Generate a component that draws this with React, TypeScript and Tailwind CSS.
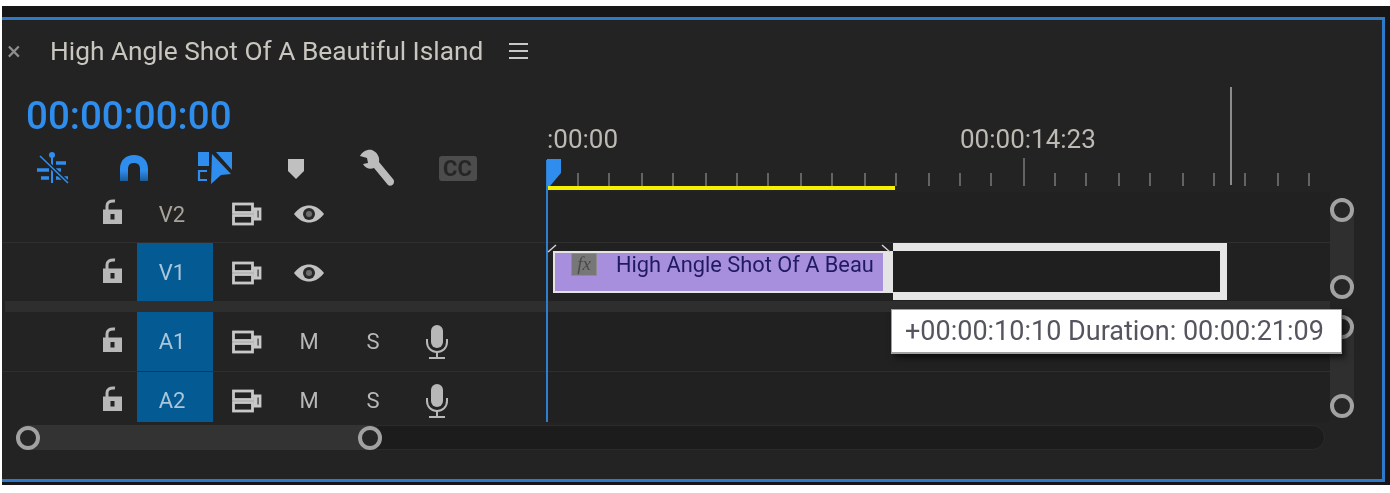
import React from "react";

const font = "font-['Roboto','Noto_Sans',sans-serif]";

function Lock() {
  return (
    <svg width="22" height="26" viewBox="0 0 22 26" fill="none" className="mt-[-4px]">
      <path d="M5 12V7C5 3.500 7.500 1.500 13 2" stroke="#b8b8b8" strokeWidth="3" />
      <path fillRule="evenodd" clipRule="evenodd" d="M1 10.500H20V25H1ZM8.500 15V20.500H12.500V15Z" fill="#b8b8b8" />
    </svg>
  );
}

function Toggle() {
  return (
    <svg width="30" height="24" viewBox="0 0 30 24" fill="none" stroke="#c8c8c8" strokeWidth="2.800">
      <rect x="1.500" y="2" width="19" height="8.500" />
      <rect x="1.500" y="13.500" width="19" height="8.500" />
      <path d="M20 7H28V17H20" />
      <path d="M23.500 8V16" strokeWidth="4" />
    </svg>
  );
}

function Eye() {
  return (
    <svg width="32" height="20" viewBox="0 0 32 20">
      <path d="M1 10C6 3.500 11 1.500 16 1.500S26 3.500 31 10C26 16.500 21 18.500 16 18.500S6 16.500 1 10Z" fill="#c2c2c2" />
      <circle cx="16" cy="10" r="6" fill="#2a2a2a" />
      <circle cx="16" cy="10" r="3" fill="#6e6e6e" />
    </svg>
  );
}

function Mic() {
  return (
    <svg width="24" height="36" viewBox="0 0 24 36" fill="none">
      <rect x="6" y="1" width="12" height="23" rx="6" fill="#b8b8b8" />
      <path d="M2 15V18C2 24 6.500 28 12 28S22 24 22 18V15" stroke="#b8b8b8" strokeWidth="2" />
      <path d="M12 28V33M4 34H20" stroke="#b8b8b8" strokeWidth="2" />
    </svg>
  );
}

function Nest() {
  return (
    <svg width="36" height="34" viewBox="0 0 36 34" fill="none" stroke="#2f8ded" strokeWidth="3">
      <path d="M17 2V32" strokeWidth="2" />
      <circle cx="17" cy="4" r="3" fill="#2f8ded" stroke="none" />
      <path d="M21 12H31M2 19H14M21 19H26M6 27H14M21 27H33" strokeWidth="3.600" />
      <path d="M5 5L33 32" stroke="#232323" strokeWidth="4.500" />
      <path d="M5 5L33 32" strokeWidth="1.600" />
    </svg>
  );
}

function Magnet() {
  return (
    <svg width="30" height="28" viewBox="0 0 30 28" fill="none">
      <defs>
        <linearGradient id="magnetFade" x1="0" y1="0" x2="0" y2="1">
          <stop offset="0.6" stopColor="#2f8ded" />
          <stop offset="1" stopColor="#1b5c9a" />
        </linearGradient>
      </defs>
      <path d="M1 27V15C1 6 7 1 15 1S29 6 29 15V27H21V15C21 11 19 9 15 9S9 11 9 15V27Z" fill="url(#magnetFade)" />
    </svg>
  );
}

function Linked() {
  return (
    <svg width="36" height="34" viewBox="0 0 36 34" fill="#2f8ded">
      <rect x="1" y="1" width="11" height="14" />
      <path d="M10 20H2V29H10" fill="none" stroke="#2f8ded" strokeWidth="2.200" />
      <path d="M19 1H35V19Z" />
      <path d="M15 3L34 23L24 24L14 33Z" />
    </svg>
  );
}

function Marker() {
  return (
    <svg width="18" height="23" viewBox="0 0 18 23">
      <path d="M1 2H17V14L9 22L1 14Z" fill="#c0c0c0" />
    </svg>
  );
}

function Wrench() {
  return (
    <svg width="36" height="38" viewBox="0 0 36 38" fill="#bcbcbc">
      <path d="M13 1C8 0 3 3 1 7L8 9L9 14L4 15C6 19 11 21 15 19L29 36C31 38 35 36 35 33C35 32 35 31 34 30L20 13C21 8 18 3 13 1Z" />
    </svg>
  );
}

function Knob() {
  return <div className="w-[24px] h-[24px] rounded-full border-[4px] border-[#a2a2a2] bg-[#262626] shrink-0" />;
}

const rows = [
  { label: "V2", h: "h-[50px]", pad: "pb-[6px]", on: false, audio: false, line: "border-b border-[#2f2f2f] box-content" },
  { label: "V1", h: "h-[58px]", pad: "pt-[1px]", on: true, audio: false, line: "" },
  { label: "A1", h: "h-[59px]", pad: "pt-[0px]", on: true, audio: true, line: "border-b border-[#2f2f2f] box-content" },
  { label: "A2", h: "h-[50px]", pad: "pt-[7px]", on: true, audio: true, line: "" },
];

function TrackHeader({ r }: { r: (typeof rows)[number] }) {
  const cell = `flex items-center justify-center ${r.pad}`;
  return (
    <div className="flex w-[545px] h-full shrink-0 bg-[#232323]">
      <div className="w-[87px]" />
      <div className={`w-[48px] ${cell}`}>
        <Lock />
      </div>
      <div className={`w-[76px] text-[22px] pr-[6px] ${cell} ${r.on ? "bg-[#045a92] text-[#a9c6dc]" : "text-[#a8a29a]"}`}>{r.label}</div>
      <div className={`w-[68px] ${cell}`}>
        <Toggle />
      </div>
      <div className={`w-[56px] text-[22px] text-[#b8b8b8] ${cell}`}>{r.audio ? "M" : <Eye />}</div>
      {r.audio && (
        <>
          <div className={`w-[72px] text-[22px] text-[#b8b8b8] ${cell}`}>S</div>
          <div className={`w-[56px] ${cell}`}>
            <Mic />
          </div>
        </>
      )}
    </div>
  );
}

function Ruler() {
  const ticks = [31, 62, 95, 126, 159, 190, 221, 254, 285, 318, 349, 382, 413, 444, 508, 539, 572, 603, 636, 667, 698, 731, 762];
  return (
    <svg width="783" height="110" viewBox="0 0 783 110" className="block">
      {ticks.map((x) => (
        <line key={x} x1={x} x2={x} y1="91" y2="104" stroke="#7a7a7a" strokeWidth="1.500" />
      ))}
      <line x1="477" x2="477" y1="76" y2="104" stroke="#7a7a7a" strokeWidth="1.500" />
      <line x1="684" x2="684" y1="5" y2="103" stroke="#8b8b8b" strokeWidth="2" />
      <rect x="1" y="104" width="347" height="4" fill="#f5f000" />
    </svg>
  );
}

export default function App() {
  return (
    <div className={`w-[1390px] h-[493px] bg-white pt-[6px] pl-[2px] overflow-hidden ${font}`}>
      <div className="h-[479px] bg-[#161616] pt-[11px] pb-[3px] pr-[5px]">
        <div className="relative h-full bg-[#232323] border-y-[3px] border-r-[3px] border-[#2f7ac8] blur-[0.5px]">
          <div className="h-[62px] flex items-center text-[#c9c6c0]">
            <span className="text-[26px] text-[#8f8f8f] pl-[5px] w-[48px] leading-none">×</span>
            <span className="text-[26.300px] leading-none pt-[1px]">High Angle Shot Of A Beautiful Island</span>
            <svg width="21" height="18" viewBox="0 0 21 18" className="ml-[25px]" stroke="#c8c8c8" strokeWidth="2.200">
              <path d="M1 2H20M1 9H20M1 16H20" />
            </svg>
          </div>

          <div className="flex h-[110px]">
            <div className="w-[545px] shrink-0">
              <div className="pl-[24px] h-[68px] flex items-center text-[38.500px] font-medium leading-none text-[#2f8ded]">00:00:00:00</div>
              <div className="flex items-center pl-[10px] h-[36px]">
                <div className="w-[81px] flex justify-center"><Nest /></div>
                <div className="w-[81px] flex justify-center"><Magnet /></div>
                <div className="w-[81px] flex justify-center"><Linked /></div>
                <div className="w-[81px] flex justify-center"><Marker /></div>
                <div className="w-[81px] flex justify-center"><Wrench /></div>
                <div className="w-[81px] flex justify-center">
                  <div className="w-[38px] h-[25px] rounded-[3px] bg-[#4c4c4c] text-[#262626] text-[22px] font-bold leading-[25px] text-center">CC</div>
                </div>
              </div>
            </div>
            <div className="relative flex-1">
              <Ruler />
              <span className="absolute left-0 top-[44px] text-[26px] leading-none text-[#bdbab4]">:00:00</span>
              <span className="absolute left-[413px] top-[44px] text-[26px] leading-none text-[#bdbab4]">00:00:14:23</span>
            </div>
          </div>

          <div className="flex h-[230px]">
            <div className="w-[1328px] shrink-0 flex flex-col">
              {rows.map((r, i) => (
                <React.Fragment key={r.label}>
                  <div className={`flex ${r.h} ${r.line} bg-[#212121]`}>
                    <TrackHeader r={r} />
                    {r.label === "V1" && (
                      <div className="flex items-start ml-[6px] pt-[8px] h-full">
                        <div className="w-[340px] h-[42px] flex items-start bg-[#a78fdd] border-[2px] border-[#e4e4e4] border-r-[10px]">
                          <span className="ml-[16px] w-[26px] h-[23px] bg-[#777777] border border-[#8d8d8d] text-[#4a4a4a] italic text-[19px] leading-[20px] text-center font-['Liberation_Serif',serif]">fx</span>
                          <span className="ml-[19px] mt-[-1px] text-[21.800px] leading-[26px] whitespace-nowrap text-[#201a63]">High Angle Shot Of A Beau</span>
                        </div>
                        <div className="w-[334px] h-[57px] mt-[-8px] border-[#e6e6e6] border-y-[8px] border-r-[7px] bg-[#1f1f1f]" />
                      </div>
                    )}
                  </div>
                  {i === 1 && <div className="h-[11px] ml-[3px] bg-[#2e2e2e]" />}
                </React.Fragment>
              ))}
            </div>
            <div className="flex flex-col pt-[6px]">
              <div className="w-[24px] h-[101px] rounded-full bg-[#2f2f2f] flex flex-col justify-between">
                <Knob />
                <Knob />
              </div>
              <div className="w-[24px] h-[103px] mt-[16px] rounded-full bg-[#2f2f2f] flex flex-col justify-between">
                <Knob />
                <Knob />
              </div>
            </div>
          </div>

          <div className="flex mt-[3px] ml-[14px] w-[1309px] h-[25px]">
            <div className="relative z-10 w-[366px] h-full rounded-full bg-[#333333] flex justify-between items-center shrink-0">
              <Knob />
              <Knob />
            </div>
            <div className="flex-1 ml-[-6px] rounded-r-full bg-[#1c1c1c] border border-[#2b2b2b]" />
          </div>

          {/* Playhead */}
          <div className="absolute left-[544px] top-[140px] w-[2px] h-[262px] bg-[#2f7fd0]" />
          <svg width="16" height="30" viewBox="0 0 16 30" className="absolute left-[544px] top-[138px]">
            <path d="M1 1H15V15L4 28H1Z" fill="#2f8ded" />
          </svg>
          {/* Trim corners */}
          <svg width="360" height="12" viewBox="0 0 360 12" fill="none" stroke="#d0d0d0" strokeWidth="1.500" className="absolute left-[545px] top-[223px]">
            <path d="M1 9L9 2M335 2L343 9" />
          </svg>

          <div className="absolute left-[889px] top-[289px] w-[451px] h-[45px] bg-white border border-b-2 border-[#a0a0a0] shadow-[3px_4px_6px_rgba(0,0,0,0.6)] flex items-center pl-[13px] text-[27px] leading-none text-[#55555f] whitespace-nowrap">
            +00:00:10:10 Duration: 00:00:21:09
          </div>
        </div>
      </div>
    </div>
  );
}
